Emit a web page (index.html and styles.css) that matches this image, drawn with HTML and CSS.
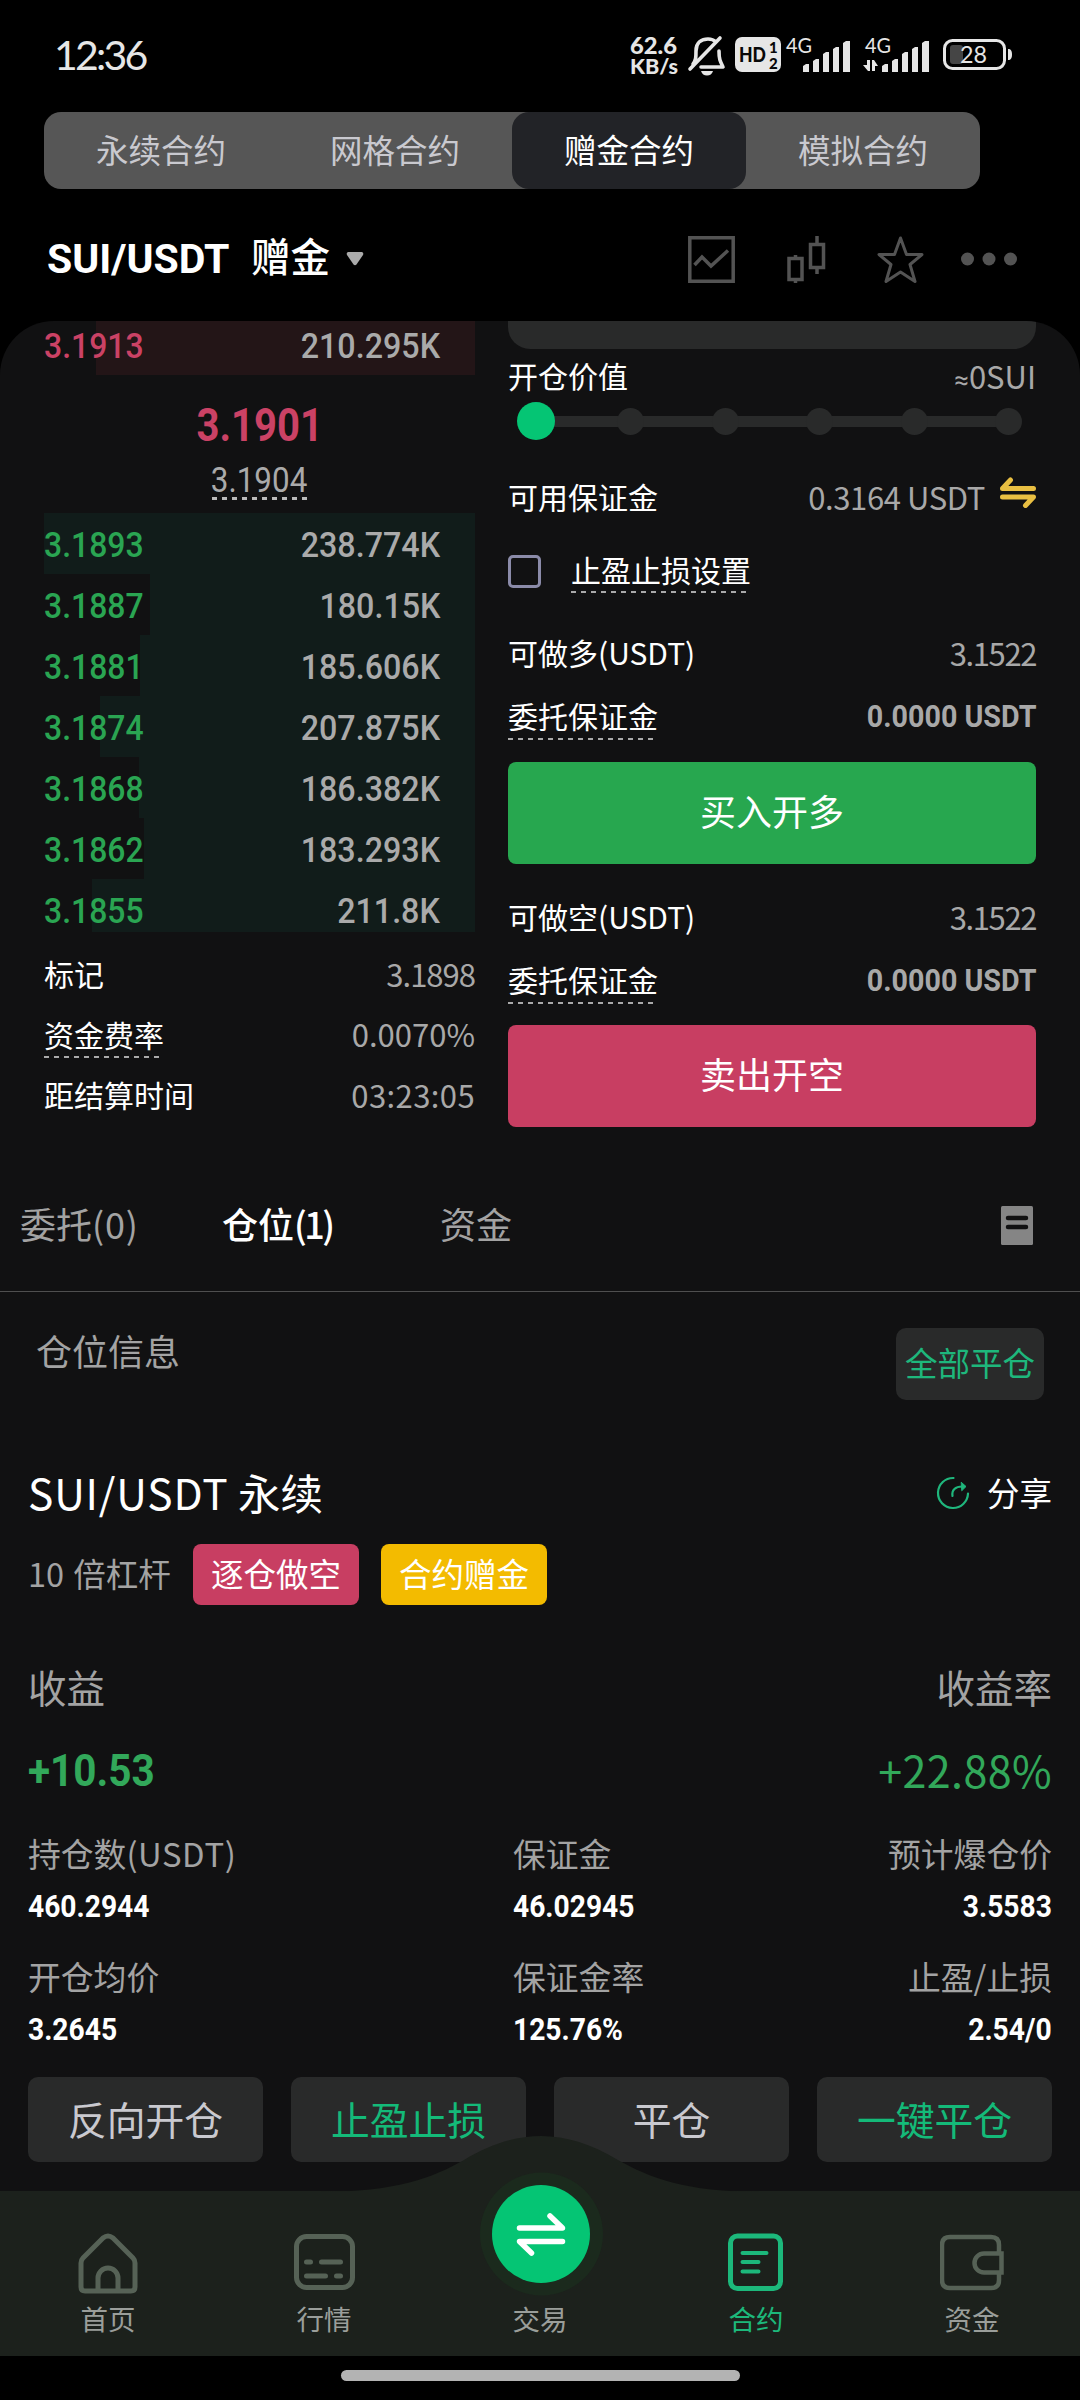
FILE: index.html
```html
<!DOCTYPE html>
<html lang="zh-CN">
<head>
<meta charset="utf-8">
<title>SUI/USDT 赠金合约</title>
<link rel="stylesheet" href="styles.css">
</head>
<body>
<div class="app">
  <header class="status">
    <time class="clock">12:36</time>
    <svg class="status-icons" width="390" height="44" viewBox="0 0 390 44">
      <g fill="#e6e6e6" font-family="Lato, sans-serif">
        <g font-weight="900" font-size="21">
          <text x="5" y="21" textLength="47" lengthAdjust="spacingAndGlyphs" font-size="22">62.6</text>
          <text x="5" y="41" textLength="48" lengthAdjust="spacingAndGlyphs">KB/s</text>
        </g>
        <g fill="none" stroke="#e6e6e6" stroke-width="3.6" stroke-linecap="round" stroke-linejoin="round">
          <path d="M95 5 65 36M68 31c3-4 3-7 3-13C71 9 77 6 83 6c3 0 6 1 8 3"/>
          <path d="M94 18c0 8 1 10 4 16H76"/>
        </g>
        <path d="M76 38h12c-1 3-3 4.500-6 4.500S77 41 76 38Z"/>
        <rect x="110" y="4" width="46" height="35" rx="7"/>
        <g fill="#080808" font-weight="900">
          <text x="114" y="29" font-size="21" textLength="27" lengthAdjust="spacingAndGlyphs">HD</text>
          <text x="144" y="20" font-size="15">1</text>
          <text x="144" y="35.500" font-size="15">2</text>
        </g>
        <text x="161" y="20" font-size="21.500" textLength="26" lengthAdjust="spacingAndGlyphs">4G</text>
        <path d="M178 33l3-2h3v8h-6ZM188 28l3-2h3v13h-6ZM198 21l3-2h3v20h-6ZM208 16l3-2h3v25h-6ZM218 10l3-2h4v31h-7Z"/>
        <text x="240" y="20" font-size="21.500" textLength="26" lengthAdjust="spacingAndGlyphs">4G</text>
        <path d="M257 33l3-2h3v8h-6ZM267 28l3-2h3v13h-6ZM277 21l3-2h3v20h-6ZM287 16l3-2h3v25h-6ZM297 10l3-2h4v31h-7Z"/>
        <path d="M242 27h3v11h-2l-5-6h4ZM247 27h2l4 6h-3v5h-3Z"/>
        <rect x="325" y="12" width="13" height="19" rx="3" fill="#454545"/>
        <rect x="319.500" y="7.500" width="60" height="28" rx="8" fill="none" stroke="#e6e6e6" stroke-width="3"/>
        <path d="M383 16c3 0 4 2 4 5.500S386 27 383 27Z"/>
        <text x="335" y="29.500" font-size="23.500" textLength="27" lengthAdjust="spacingAndGlyphs">28</text>
      </g>
    </svg>
  </header>

  <nav class="modes">
    <span>永续合约</span><span>网格合约</span><span class="active">赠金合约</span><span>模拟合约</span>
  </nav>

  <div class="pair">
    <strong class="pair-name"><span class="din">SUI/USDT</span></strong>
    <span class="pair-kind">赠金</span>
    <svg class="caret" width="18" height="14" viewBox="0 0 18 14"><path d="M2 0h14q2 1 1 3l-6.500 9.500q-1.500 1.500-3 0L1 3Q0 1 2 0Z" fill="#aaa"/></svg>
    <svg class="pair-tools" width="332" height="48" viewBox="0 0 332 48" fill="none" stroke="#535353" stroke-width="3.500">
      <path d="M1.800 2.800h43.400v43.400H1.800ZM6.500 30l7.500-8 9 9L40 15.500"/>
      <path d="M101 23.500h13v21h-13ZM107.500 20v4M107.500 44.500v4M122.500 9.500h13v23h-13ZM129 1v9M129 33v6"/>
      <path d="M212.500 3l6 16.500h15.500L222 29.500l5 17-14.500-9.500-14.500 9.500 5-17-12-10h15.500Z" stroke-width="3" stroke-linejoin="round"/>
      <g fill="#535353" stroke="none"><circle cx="279.500" cy="24" r="6.500"/><circle cx="301" cy="24" r="6.500"/><circle cx="322.500" cy="24" r="6.500"/></g>
    </svg>
  </div>

  <main class="panel">
    <div class="trade">
      <section class="book">
        <div class="level ask" style="--depth:379px"><span class="din">3.1913</span><span class="din amt">210.295K</span></div>
        <div class="mid">
          <b><span class="din last">3.1901</span></b>
          <span class="index"><span class="din">3.1904</span></span>
        </div>
        <div class="level" style="--depth:431px"><span class="din">3.1893</span><span class="din amt">238.774K</span></div>
        <div class="level" style="--depth:325px"><span class="din">3.1887</span><span class="din amt">180.15K</span></div>
        <div class="level" style="--depth:335px"><span class="din">3.1881</span><span class="din amt">185.606K</span></div>
        <div class="level" style="--depth:375px"><span class="din">3.1874</span><span class="din amt">207.875K</span></div>
        <div class="level" style="--depth:336px"><span class="din">3.1868</span><span class="din amt">186.382K</span></div>
        <div class="level" style="--depth:331px"><span class="din">3.1862</span><span class="din amt">183.293K</span></div>
        <div class="level" style="--depth:383px"><span class="din">3.1855</span><span class="din amt">211.8K</span></div>
        <div class="facts">
          <div><span>标记</span><span class="val tight">3.1898</span></div>
          <div><span class="dash">资金费率</span><span class="val">0.0070%</span></div>
          <div><span>距结算时间</span><span class="val wide">03:23:05</span></div>
        </div>
      </section>

      <section class="form">
        <div class="field-end"></div>
        <div class="row worth"><span>开仓价值</span><span class="val"><span class="approx">≈</span>0SUI</span></div>
        <div class="slider"><i class="on"></i><i></i><i></i><i></i><i></i><i></i></div>
        <div class="row avail"><span>可用保证金</span><span class="val">0.3164 USDT</span>
          <svg width="36" height="31" viewBox="0 0 36 31" fill="none" stroke="#e9bf42" stroke-width="5" stroke-linecap="round" stroke-linejoin="round"><path d="M33.500 11.500h-31L10.500 3M2.500 20h31L25.500 28.500"/></svg>
        </div>
        <div class="row tpsl"><span class="check"></span><span class="dash">止盈止损设置</span></div>
        <div class="row can"><span>可做多(USDT)</span><span class="val tight">3.1522</span></div>
        <div class="row cost"><span class="dash">委托保证金</span><b class="val"><span class="din">0.0000 USDT</span></b></div>
        <button class="buy">买入开多</button>
        <div class="row can short"><span>可做空(USDT)</span><span class="val tight">3.1522</span></div>
        <div class="row cost"><span class="dash">委托保证金</span><b class="val"><span class="din">0.0000 USDT</span></b></div>
        <button class="sell">卖出开空</button>
      </section>
    </div>

    <div class="tabs">
      <span>委托<em>(0)</em></span><span class="active">仓位<em>(1)</em></span><span>资金</span>
      <svg width="32" height="39" viewBox="0 0 32 39"><rect width="32" height="39" rx="1.500" fill="#858585"/><path d="M7 12h18M7 21h18" stroke="#111112" stroke-width="4.500" stroke-linecap="round"/></svg>
    </div>

    <div class="section-head"><span>仓位信息</span><button>全部平仓</button></div>

    <section class="position">
      <div class="title"><h2><em>SUI/USDT</em> 永续</h2>
        <span class="share"><svg width="34" height="34" viewBox="0 0 34 34" fill="none" stroke="#1fb67c" stroke-width="2.200" stroke-linecap="round"><path d="M17.500 2A15 15 0 1 0 32 17.500"/><path d="M16.500 20c-1-6 3-9.500 9.500-9.500"/><path d="M25.500 6.500 30 10.500l-4 4Z" fill="#1fb67c" stroke-width="1"/></svg>分享</span>
      </div>
      <div class="tags"><span class="lever">10 倍杠杆</span><span class="tag pink">逐仓做空</span><span class="tag gold">合约赠金</span></div>
      <div class="pnl-labels"><span>收益</span><span>收益率</span></div>
      <div class="pnl"><b><span class="din">+10.53</span></b><span class="rate">+22.88%</span></div>
      <div class="stats">
        <div><span>持仓数<em>(USDT)</em></span><b><span class="din">460.2944</span></b></div>
        <div><span>保证金</span><b><span class="din">46.02945</span></b></div>
        <div><span>预计爆仓价</span><b><span class="din">3.5583</span></b></div>
        <div><span>开仓均价</span><b><span class="din">3.2645</span></b></div>
        <div><span>保证金率</span><b><span class="din">125.76%</span></b></div>
        <div><span>止盈/止损</span><b><span class="din">2.54/0</span></b></div>
      </div>
      <div class="actions"><button>反向开仓</button><button class="green">止盈止损</button><button>平仓</button><button class="green">一键平仓</button></div>
    </section>
  </main>

  <footer class="nav">
    <svg class="hump" width="440" height="118" viewBox="0 0 440 118">
      <path d="M0 56C76 56 112 42 144 24 170 8 196 0 221 0S272 8 298 24C330 42 366 56 440 56V118H0Z" fill="#1c211c"/>
      <circle cx="221.500" cy="98" r="61.500" fill="#1b2a1d"/>
    </svg>
    <a><svg width="64" height="64" viewBox="0 0 64 64" fill="none" stroke="#566256" stroke-width="5"><path d="M5 33q0-3 2-5L27 8q5-4 10 0l20 20q2 2 2 5v24q0 4-4 4H9q-4 0-4-4ZM22 61V48a10 10 0 0 1 20 0v13" stroke-linejoin="round"/></svg><span>首页</span></a>
    <a><svg width="64" height="64" viewBox="0 0 64 64" fill="none" stroke="#566256" stroke-width="5" stroke-linecap="round"><rect x="4.500" y="6.500" width="56" height="51" rx="10"/><path d="M14.500 32h4M29.500 32h19M14.500 46h19M44.500 46h4"/></svg><span>行情</span></a>
    <a><svg width="64" height="64"></svg><span>交易</span></a>
    <a class="active"><svg width="64" height="64" viewBox="0 0 64 64" fill="none" stroke="#1cb87b" stroke-linecap="round"><rect x="6.500" y="6" width="50" height="52.500" rx="7" stroke-width="5"/><path d="M18.500 23h24M18.500 32h16M18.500 41.500h16" stroke-width="4"/></svg><span>合约</span></a>
    <a><svg width="64" height="64" viewBox="0 0 64 64" fill="none" stroke="#566256" stroke-width="4.500"><path d="M59 23V15q0-8-8-8H10q-8 0-8 8v35q0 8 8 8h41q8 0 8-8V43M61.500 23.500H44a9.500 9.500 0 0 0 0 19h17.500Z"/></svg><span>资金</span></a>
    <div class="swap"><svg width="52" height="44" viewBox="0 0 52 44" fill="none" stroke="#fff" stroke-width="5.500" stroke-linecap="round" stroke-linejoin="round"><path d="M4.500 16h43L35 4M47.500 29.500h-43L16.500 41"/></svg></div>
  </footer>
  <div class="gesture"></div>
</div>
</body>
</html>
```

FILE: styles.css
```css
* { box-sizing: border-box; }
body { margin: 0; background: #000; }
button { border: 0; padding: 0; font-family: inherit; display: flex; align-items: center; justify-content: center; }
svg { display: block; flex: none; }
em { font-style: normal; }
b, strong { font-family: Roboto, sans-serif; }

.app {
  width: 1080px; height: 2400px; overflow: hidden;
  display: flex; flex-direction: column;
  font-family: "Noto Sans CJK SC", sans-serif; font-size: 30px; color: #fff;
}
.din { display: inline-block; font-family: Roboto, sans-serif; transform: scaleX(.91); transform-origin: left center; white-space: nowrap; }

/* status bar */
.status { height: 112px; padding: 33px 65px 0 54px; display: flex; justify-content: space-between; }
.clock { font-family: Lato, sans-serif; font-size: 41px; line-height: 43px; color: #e6e6e6; letter-spacing: -2.800px; }

/* contract mode switch */
.modes { width: 936px; height: 77px; margin-left: 44px; border-radius: 17px; background: #565656; display: grid; grid-template-columns: repeat(4, 1fr); }
.modes span { padding-bottom: 5px; display: flex; align-items: center; justify-content: center; font-size: 32.500px; color: #c9c9cf; }
.modes .active { background: #222327; border-radius: 17px; color: #fff; }

.pair { height: 132px; padding: 0 60px 0 47px; display: flex; align-items: center; }
.pair-name { width: 204px; font-size: 41px; padding-top: 7px; }
.pair-name .din { transform: scaleX(1); }
.pair-kind { font-size: 39.500px; font-weight: 500; line-height: 50px; }
.caret { margin: 7px 0 0 16px; }
.pair-tools { margin-left: auto; margin-top: 7px; }

.panel { height: 1870px; border-radius: 54px 54px 0 0; overflow: hidden; background: #111112; }
.trade { display: flex; gap: 33px; padding: 0 44px; }

/* order book */
.book { width: 431px; }
.level {
  height: 61px; padding-right: 35px; display: flex; justify-content: space-between; align-items: flex-start;
  line-height: 65px; font-size: 34.500px; font-weight: 500; color: #2aa552;
  background: linear-gradient(#111c1a, #111c1a) right top / var(--depth) 100% no-repeat;
}
.level.ask { height: 54px; line-height: 51px; color: #cb4265; background-image: linear-gradient(#231517, #231517); }
.level:nth-child(9) { height: 53px; }
.level .din { transform: scaleX(.925); }
.level .amt { color: #aaa; transform: scaleX(.935); transform-origin: right center; }
.mid { height: 138px; padding-top: 25px; display: flex; flex-direction: column; align-items: center; gap: 11px; }
.mid b { height: 51px; line-height: 51px; font-size: 46px; color: #cb4265; }
.mid .din { transform-origin: center; }
.mid .last { transform: scaleX(.87); }
.index { height: 38px; line-height: 36px; width: 96px; display: flex; justify-content: center; font-size: 34.500px; color: #aaa; background: repeating-linear-gradient(90deg, #bbb 0 5px, transparent 5px 10px) left bottom / 100% 3px no-repeat; }
.facts { padding-top: 11px; }
.facts div { height: 60.500px; display: flex; align-items: center; justify-content: space-between; }
.val { color: #a8a8a8; font-size: 31px; white-space: nowrap; }
.tight { letter-spacing: -1.400px; }
.wide { letter-spacing: .4px; }
.facts .tight { letter-spacing: -1px; }
.approx { font-family: Roboto, sans-serif; font-size: 26px; }
.dash { line-height: 48px; background: repeating-linear-gradient(90deg, #aaa 0 5px, transparent 5px 10px) left bottom / calc(100% - 4px) 2px no-repeat; }

/* order form */
.form { width: 528px; display: flex; flex-direction: column; }
.field-end { height: 28px; border-radius: 0 0 22px 22px; background: #292a2a; }
.row { height: 50px; display: flex; align-items: center; justify-content: space-between; }
.row.worth { height: 52px; }
.slider { height: 40px; padding: 0 14px 0 9px; display: flex; align-items: center; justify-content: space-between; background: linear-gradient(#292a2a, #292a2a) 28px 15px / 472px 11px no-repeat; }
.slider i { width: 27px; height: 27px; border-radius: 50%; background: #292a2a; }
.slider .on { width: 38px; height: 38px; background: #05c574; margin-right: -5px; }
.avail { margin-top: 30px; }
.avail .val { margin-left: auto; margin-right: 15px; letter-spacing: -.4px; }
.avail svg { margin-bottom: 8px; }
.tpsl { margin-top: 23px; justify-content: flex-start; gap: 30px; }
.check { width: 33px; height: 33px; margin-top: 4px; border: 3px solid #8b8ba9; border-radius: 5px; }
.can { margin-top: 33px; }
.cost { margin-top: 13px; }
.cost .dash { line-height: 50px; }
.cost .val { margin-top: 3px; }
.cost .din { transform: scaleX(.925); transform-origin: right center; }
.form button { height: 102px; border-radius: 8px; color: #fff; font-size: 36px; padding-bottom: 6px; }
.buy { margin-top: 22px; background: #27a74f; }
.can.short { margin-top: 27px; }
.sell { margin-top: 21px; background: #c83e62; }

/* list tabs */
.tabs { height: 135px; margin-top: 30px; padding: 0 47px 2px 20px; border-bottom: 1px solid #4f4f4f; display: flex; align-items: center; font-size: 36px; color: #a3a3a3; }
.tabs span { white-space: nowrap; }
.tabs em { letter-spacing: .8px; }
.tabs span:nth-child(1) { width: 202px; }
.tabs span:nth-child(2) { width: 218px; }
.tabs .active { color: #fff; font-weight: 500; }
.tabs .active em { letter-spacing: -2.500px; }
.tabs svg { margin: 4px 0 0 auto; }

.section-head { padding: 36px 36px 0 36px; display: flex; justify-content: space-between; font-size: 36px; line-height: 44px; color: #a3a3a3; }
.section-head button { width: 148px; height: 72px; border-radius: 10px; background: #292a2a; color: #1eb77c; font-size: 32.500px; padding-bottom: 6px; }

/* position card */
.position { padding: 61px 28px 0; }
.title { height: 60px; display: flex; align-items: center; justify-content: space-between; }
.title h2 { margin: 0; font-size: 42.500px; font-weight: 400; }
.title em { letter-spacing: .8px; }
.share { display: flex; align-items: center; gap: 17px; font-size: 32.500px; }
.share svg { margin-top: 4px; }
.tags { height: 61px; margin-top: 23px; display: flex; font-size: 32.500px; line-height: 57px; }
.lever { width: 165px; color: #a3a3a3; white-space: nowrap; word-spacing: 2px; }
.tag { width: 166px; height: 61px; margin-right: 22px; border-radius: 8px; text-align: center; }
.pink { background: #c83e62; }
.gold { background: #f3bb00; }
.pnl-labels { height: 60px; margin-top: 51px; display: flex; align-items: center; justify-content: space-between; font-size: 38.500px; color: #a3a3a3; }
.pnl { height: 60px; margin-top: 25px; display: flex; align-items: center; justify-content: space-between; color: #32a85a; }
.pnl b { font-size: 43.500px; }
.pnl .din { transform: scaleX(.93); }
.pnl .rate { font-size: 43px; line-height: 60px; margin-top: -4px; letter-spacing: .4px; }
.stats { margin-top: 27px; display: grid; grid-template-columns: 485px 1fr auto; row-gap: 19px; }
.stats div { display: flex; flex-direction: column; gap: 4px; font-size: 32.800px; line-height: 50px; color: #a3a3a3; }
.stats div > span { height: 50px; }
.stats em { letter-spacing: .6px; }
.stats b { height: 50px; font-size: 31px; color: #fff; }
.stats div:nth-child(3n) { text-align: right; }
.stats div:nth-child(3n) .din { transform-origin: right center; }
.actions { margin-top: 22px; display: grid; grid-template-columns: repeat(4, 1fr); gap: 28px; }
.actions button { height: 85px; border-radius: 10px; background: #292a2a; color: #c9c9cf; font-size: 38.800px; padding-bottom: 4px; }
.actions .green { color: #14ba79; }

/* bottom navigation */
.nav { position: relative; height: 165px; background: #1c211c; display: grid; grid-template-columns: repeat(5, 1fr); }
.nav a { position: relative; padding-top: 39px; display: flex; flex-direction: column; align-items: center; font-size: 27.500px; line-height: 40px; color: #9a9e9a; }
.nav a span { margin-top: 4px; }
.nav .active { color: #1cb87b; }
.hump { position: absolute; left: 320px; top: -55px; overflow: visible; }
.swap { position: absolute; left: 492px; top: -6px; width: 98px; height: 98px; border-radius: 50%; background: #05c574; display: flex; align-items: center; justify-content: center; }
.gesture { width: 399px; height: 11px; margin: 14px auto 0; border-radius: 6px; background: #b3b3b3; }
```
